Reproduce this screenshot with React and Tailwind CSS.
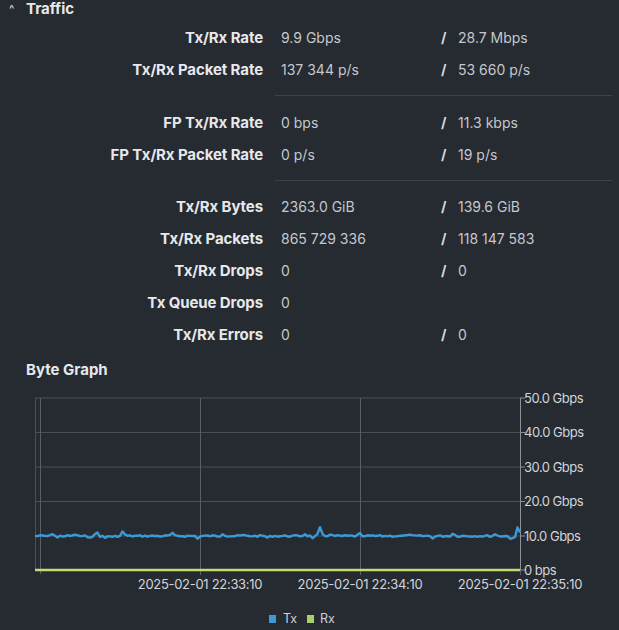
import React from "react";

const groups = [
  [
    ["Tx/Rx Rate", "9.9 Gbps", "28.7 Mbps"],
    ["Tx/Rx Packet Rate", "137 344 p/s", "53 660 p/s"],
  ],
  [
    ["FP Tx/Rx Rate", "0 bps", "11.3 kbps"],
    ["FP Tx/Rx Packet Rate", "0 p/s", "19 p/s"],
  ],
  [
    ["Tx/Rx Bytes", "2363.0 GiB", "139.6 GiB"],
    ["Tx/Rx Packets", "865 729 336", "118 147 583"],
    ["Tx/Rx Drops", "0", "0"],
    ["Tx Queue Drops", "0", null],
    ["Tx/Rx Errors", "0", "0"],
  ],
];

const spikes = [
  [53, -3], [57, 2], [75, -1.5], [88, 2.5], [97, -4], [105, 2], [113, 1.5], [123, -5],
  [172, -3], [198, 2.5], [223, -3], [243, -1], [268, 2], [305, -2], [313, 2], [320, -8],
  [330, -2], [360, -3], [362, 2], [408, -2], [433, 2], [453, -3], [495, -2], [510, 2],
  [514, 3], [518, -10],
];

function txPath() {
  let seed = 7;
  const rand = () => {
    seed = (seed * 9301 + 49297) % 233280;
    return seed / 233280;
  };
  const pts = [];
  for (let x = 35; x <= 520; x += 2.5) {
    let y = 535 + (rand() - 0.5) * 1.8;
    for (const [sx, dy] of spikes) {
      const d = Math.abs(x - sx);
      if (d < 3) y += dy * (1 - d / 3);
    }
    pts.push(`${x.toFixed(1)},${(y - 385).toFixed(1)}`);
  }
  return "M" + pts.join(" L");
}

function Row({ label, a, b }) {
  return (
    <div className="flex h-8 items-baseline text-[14px] leading-8">
      <div className="w-[264px] pr-px text-right text-[15px] font-bold tracking-[-0.1px] text-[#e6e8eb]">{label}</div>
      <div className="ml-[17px] w-[160px] text-[#c4c8ce]">{a}</div>
      {b !== null ? (
        <>
          <div className="w-[17px] font-bold text-[#d6d9dd]">/</div>
          <div className="text-[#c4c8ce]">{b}</div>
        </>
      ) : null}
    </div>
  );
}

function ByteGraph() {
  const gridY = [12, 46.5, 81, 115.5, 150, 184];
  const yLabels = ["50.0 Gbps", "40.0 Gbps", "30.0 Gbps", "20.0 Gbps", "10.0 Gbps", "0 bps"];
  const xTicks = [200, 360, 520];
  return (
    <svg width="619" height="245" viewBox="0 0 619 245" className="mt-[4px] block">
      {gridY.map((y) => (
        <line key={y} x1="35" x2="520" y1={y} y2={y} stroke="#4a4f57" strokeWidth="1" />
      ))}
      <line x1="35.5" x2="35.5" y1="12" y2="184" stroke="#4a4f57" />
      <line x1="40.5" x2="40.5" y1="12" y2="188" stroke="#5a5f67" />
      {xTicks.map((x) => (
        <line key={x} x1={x + 0.5} x2={x + 0.5} y1="12" y2="189" stroke="#5a5f67" />
      ))}
      <line x1="520.5" x2="520.5" y1="12" y2="184" stroke="#8c9198" />
      {gridY.map((y, i) => (
        <g key={i}>
          <line x1="520" x2="525" y1={y} y2={y} stroke="#8c9198" />
          <text x="524" y={y + 4.5} fill="#d2d5d9" fontSize="13" letterSpacing="-0.5">
            {yLabels[i]}
          </text>
        </g>
      ))}
      <path d={txPath()} fill="none" stroke="#3b9ad8" strokeWidth="2.4" strokeLinejoin="round" />
      <line x1="35" x2="520" y1="184" y2="184" stroke="#c5da78" strokeWidth="2.5" />
      {xTicks.map((x) => (
        <text key={x} x={x} y="203" fill="#d2d5d9" fontSize="13" textAnchor="middle" letterSpacing="-0.3">
          2025-02-01 22:{x === 200 ? "33" : x === 360 ? "34" : "35"}:10
        </text>
      ))}
      <rect x="269" y="229" width="7" height="8" fill="#3b9ad8" />
      <text x="283" y="237" fill="#cfd2d6" fontSize="12.5">Tx</text>
      <rect x="307" y="229" width="7" height="8" fill="#a9cf6b" />
      <text x="320" y="237" fill="#cfd2d6" fontSize="12.5">Rx</text>
    </svg>
  );
}

export default function App() {
  return (
    <div className="h-[630px] w-[619px] overflow-hidden bg-[#262a31] font-['Inter',sans-serif]">
      <div className="flex h-[19px] items-center text-[15px] font-bold text-[#e6e8eb]">
        <span className="ml-[9px] w-[17px] text-[11px] text-[#c4c8ce]">^</span>
        <span>Traffic</span>
      </div>
      <div className="mt-[3px]">
        {groups.map((g, gi) => (
          <div key={gi}>
            {gi > 0 ? (
              <div className={`ml-[275px] mr-[7px] mt-[9px] h-px bg-[#3c414a] ${gi === 1 ? "mb-[11px]" : "mb-[10px]"}`} />
            ) : null}
            {g.map(([label, a, b]) => (
              <Row key={label} label={label} a={a} b={b} />
            ))}
          </div>
        ))}
      </div>
      <div className="ml-[26px] mt-[8px] text-[15px] font-bold text-[#e6e8eb]">Byte Graph</div>
      <ByteGraph />
    </div>
  );
}
